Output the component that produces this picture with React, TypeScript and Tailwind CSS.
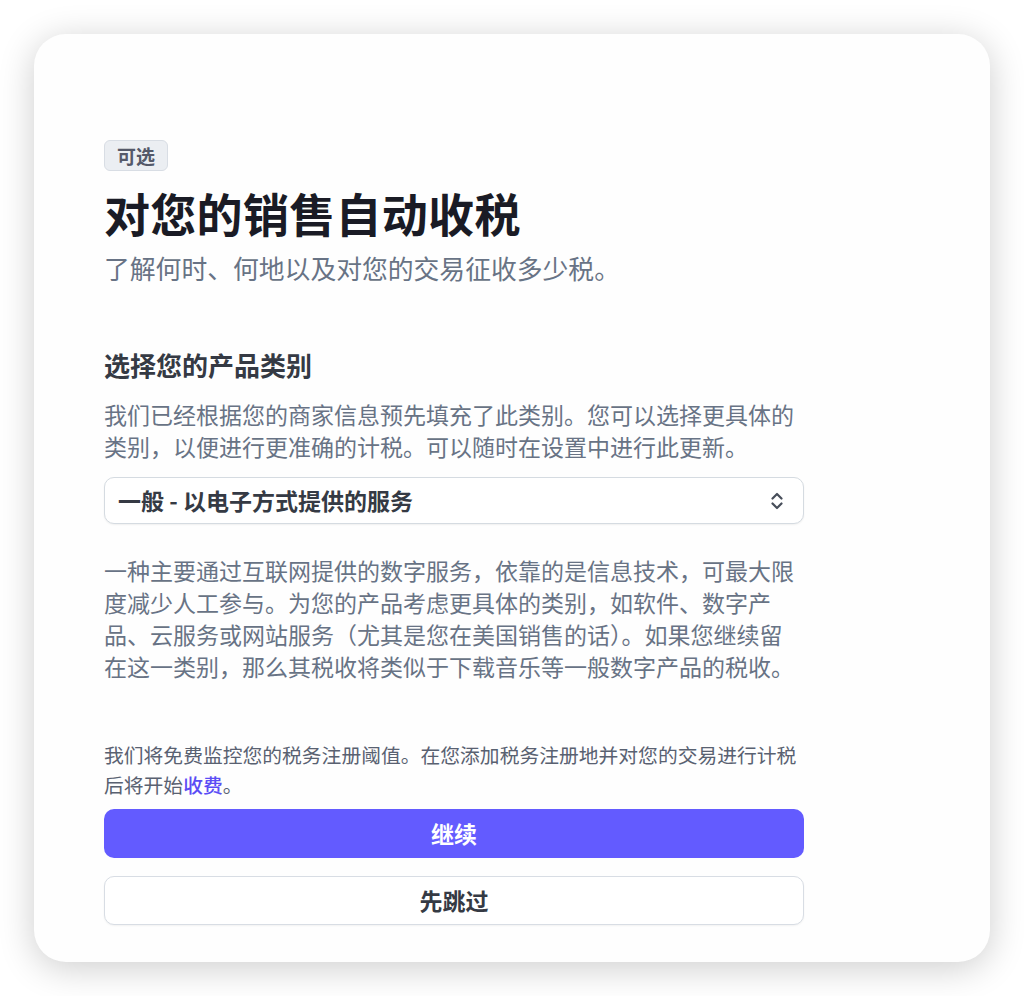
import React from "react";

export default function App() {
  return (
    <div
      className="min-h-[996px] w-[1024px] bg-white p-[34px]"
      style={{ fontFamily: '"Noto Sans CJK SC", "Noto Sans", sans-serif' }}
    >
      <div className="h-[928px] w-[956px] rounded-[32px] bg-[#fefefe] shadow-[0_6px_36px_rgba(0,0,0,0.2)] pl-[70px] pt-[106px]">
        <div className="w-[700px] flex flex-col">
          <div className="self-start h-[31px] px-[12px] flex items-center rounded-[6px] border border-[#d8dde4] bg-[#ebeef2] text-[19px] font-semibold text-[#545969] leading-none">
            可选
          </div>
          <h1 className="mt-[13px] text-[46px] leading-[56px] font-bold text-[#1a1b25] tracking-[0.3px]">
            对您的销售自动收税
          </h1>
          <p className="mt-[10px] text-[25.8px] leading-[36px] text-[#687385]">
            了解何时、何地以及对您的交易征收多少税。
          </p>
          <h2 className="mt-[61px] text-[26px] leading-[36px] font-bold text-[#353a44]">
            选择您的产品类别
          </h2>
          <p className="mt-[15px] text-[23px] leading-[32px] text-[#687385]">
            我们已经根据您的商家信息预先填充了此类别。您可以选择更具体的类别，以便进行更准确的计税。可以随时在设置中进行此更新。
          </p>
          <div className="mt-[15px] h-[47px] rounded-[10px] border border-[#d5dbe1] bg-white shadow-[0_1px_2px_rgba(0,0,0,0.06)] flex items-center justify-between pl-[13px] pr-[20px]">
            <span className="text-[23px] font-bold text-[#353a44]">一般 - 以电子方式提供的服务</span>
            <svg width="12" height="22" viewBox="0 0 12 22" fill="none">
              <path d="M1.5 8.5 L6 4 L10.5 8.5" stroke="#474e5a" strokeWidth="2.2" strokeLinecap="round" strokeLinejoin="round" />
              <path d="M1.5 13.5 L6 18 L10.5 13.5" stroke="#474e5a" strokeWidth="2.2" strokeLinecap="round" strokeLinejoin="round" />
            </svg>
          </div>
          <p className="mt-[30px] text-[23px] leading-[32px] text-[#687385]">
            一种主要通过互联网提供的数字服务，依靠的是信息技术，可最大限度减少人工参与。为您的产品考虑更具体的类别，如软件、数字产品、云服务或网站服务（尤其是您在美国销售的话）。如果您继续留在这一类别，那么其税收将类似于下载音乐等一般数字产品的税收。
          </p>
          <p className="mt-[58px] text-[19.8px] leading-[30px] text-[#596171]">
            我们将免费监控您的税务注册阈值。在您添加税务注册地并对您的交易进行计税后将开始<span className="text-[#5b4df5] font-medium">收费</span>。
          </p>
          <button className="mt-[9px] h-[49px] w-full rounded-[10px] bg-[#635bff] text-white text-[23px] font-bold">
            继续
          </button>
          <button className="mt-[18px] h-[49px] w-full rounded-[10px] border border-[#d8dde4] bg-white text-[#353a44] text-[23px] font-bold shadow-[0_1px_2px_rgba(0,0,0,0.05)]">
            先跳过
          </button>
        </div>
      </div>
    </div>
  );
}
